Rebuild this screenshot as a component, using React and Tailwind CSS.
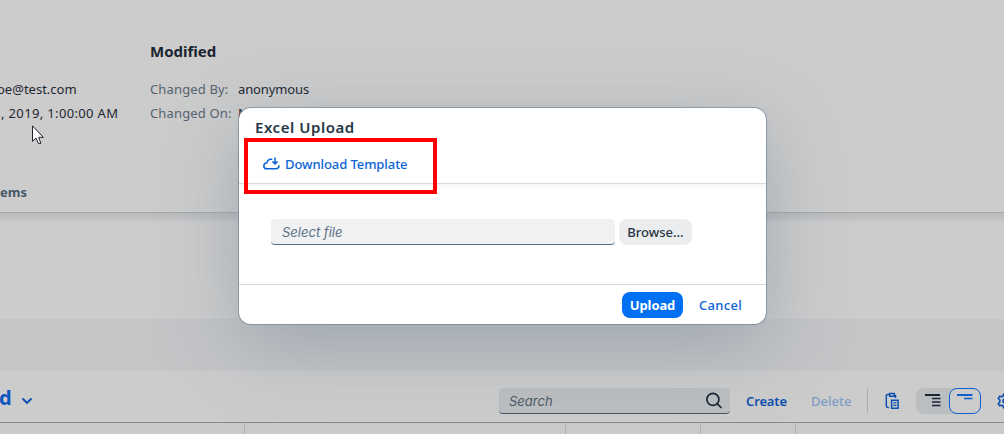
import React from "react";

function Field({ label, value }) {
  return (
    <div className="flex h-6 gap-2 text-[13px] leading-6 whitespace-nowrap">
      <span className="w-[80px] tracking-[0.15px] text-[#556370]">{label}</span>
      <span className="tracking-[-0.12px] text-[#1d2733]">{value}</span>
    </div>
  );
}

function Details() {
  return (
    <section className="flex h-[213px] shrink-0 flex-col border-b border-[#a6a8aa] bg-[#cccccc] pt-[39px]">
      <div className="flex h-[143px]">
        <div className="flex w-[150px] shrink-0 flex-col pt-[38px] text-[13px] leading-6 whitespace-nowrap text-[#1d2733]">
          <span className="-ml-[3px]">oe@test.com</span>
          <span className="ml-px tracking-[0.35px]">, 2019, 1:00:00 AM</span>
        </div>
        <div className="flex flex-col">
          <h2 className="h-[38px] text-[15px] leading-[25px] font-bold text-[#1a2430]">Modified</h2>
          <Field label="Changed By:" value="anonymous" />
          <Field label="Changed On:" value="Nov" />
        </div>
      </div>
      <div className="text-[13px] leading-5 font-bold text-[#475768]">ems</div>
    </section>
  );
}

function PasteIcon() {
  return (
    <svg width="15" height="18" viewBox="0 0 15 18" fill="none" stroke="#0c4fae" strokeWidth="1.5">
      <path d="M4 2.5H2.5Q1.3 2.5 1.3 3.7V14Q1.3 15.4 2.7 15.4H4" />
      <path d="M4.7 1.4H9.3V4.2H4.7Z" />
      <path d="M10.5 2.8V6" />
      <path d="M6.6 8.2H13.1V16.2H6.6Z" />
      <path d="M8.3 10.9H11.4M8.3 13.4H11.4" strokeWidth="1.2" />
    </svg>
  );
}

function Toolbar() {
  return (
    <div className="flex h-[51px] shrink-0 items-start pt-[17px] text-[13px] leading-[26px]">
      <div className="flex w-[499px] shrink-0 items-center">
        <span className="-ml-[1px] text-[20px] leading-[20px] font-bold text-[#0c56bd]">d</span>
        <svg className="mt-[6px] ml-[9px]" width="12" height="8" viewBox="0 0 12 8" fill="none" stroke="#0c4fae" strokeWidth="1.9" strokeLinecap="round">
          <path d="M2 2L6 6L10 2" />
        </svg>
      </div>
      <div className="flex h-[26px] w-[231px] shrink-0 items-center justify-between rounded-[4px] border-b border-[#45566a] bg-[#bcbfc1] pr-2 pl-[10px]">
        <span className="font-['Inter',sans-serif] text-[13px] text-[#4c5965] italic">Search</span>
        <svg width="17" height="17" viewBox="0 0 17 17" fill="none" stroke="#1a2736" strokeWidth="1.7" strokeLinecap="round">
          <circle cx="7.9" cy="7.4" r="6" />
          <path d="M12.3 11.8L16 15.5" />
        </svg>
      </div>
      <span className="ml-4 w-[65px] shrink-0 font-semibold tracking-[-0.15px] text-[#0c4fae]">Create</span>
      <span className="w-[56px] shrink-0 font-medium text-[#7f9cc5]">Delete</span>
      <div className="mt-[1px] h-6 w-px shrink-0 bg-[#a9adb1]" />
      <div className="mt-[4px] ml-[17px] w-[15px] shrink-0">
        <PasteIcon />
      </div>
      <div className="ml-4 flex h-[26px] w-[65px] shrink-0 justify-between rounded-lg bg-[#bbbec0]">
        <svg className="mt-[6px] ml-[9px]" width="16" height="13" viewBox="0 0 16 13" fill="none" stroke="#1a2736">
          <path d="M0 1H15" strokeWidth="2" />
          <path d="M7 4.5H15.5M7 8H15.5M7 11.5H15.5" strokeWidth="1.5" />
        </svg>
        <div className="flex h-[26px] w-8 rounded-lg border border-[#0c5fce] bg-[#cccccc]">
          <svg className="mt-[5px] ml-[7px]" width="16" height="6" viewBox="0 0 16 6" fill="none" stroke="#0c5fce">
            <path d="M0 1H15.5" strokeWidth="2" />
            <path d="M7 4.5H15.5" strokeWidth="1.5" />
          </svg>
        </div>
      </div>
      <svg className="mt-[5px] ml-4 shrink-0" width="16" height="16" viewBox="0 0 16 16" fill="none" stroke="#0c4fae" strokeWidth="1.6" strokeLinejoin="round">
        <path d="M6.7 1H9.3L9.8 3L11.3 3.8L13.3 3.2L14.7 5.5L13.2 7V9L14.7 10.5L13.3 12.8L11.3 12.2L9.8 13L9.3 15H6.7L6.2 13L4.7 12.2L2.7 12.8L1.3 10.5L2.8 9V7L1.3 5.5L2.7 3.2L4.7 3.8L6.2 3Z" />
        <circle cx="8" cy="8" r="2" />
      </svg>
    </div>
  );
}

function Dialog() {
  return (
    <div className="absolute top-[108px] left-[239px] flex h-[216px] w-[527px] flex-col rounded-xl bg-white shadow-[0_0_0_1px_rgba(85,107,130,0.45),0_20px_80px_rgba(85,107,130,0.36)]">
      <header className="flex h-[76px] shrink-0 flex-col border-b border-[#d9d9d9] shadow-[0_2px_4px_rgba(85,107,130,0.08)]">
        <h1 className="mt-[7px] ml-4 h-6 text-[15px] leading-6 font-semibold tracking-[0.55px] text-[#263645]">Excel Upload</h1>
        <div className="mt-[12px] ml-6 flex h-[26px] items-center text-[13px] font-medium text-[#0a64d6]">
          <svg className="-mt-px" width="17" height="14" viewBox="0 0 17 14" fill="none" stroke="#0a64d6" strokeWidth="1.5" strokeLinecap="round" strokeLinejoin="round">
            <path d="M8.7 2.3C6.4 1.7 4.4 3.2 3.9 5.7C1.9 6 .8 7.2 .8 8.9C.8 10.9 2.2 11.8 4 11.8H12.7C14.7 11.8 16 10.6 16 8.8" />
            <path d="M12 .9V6.8M9.8 4.7L12 6.9L14.2 4.7" />
          </svg>
          <span className="mt-px ml-[5px] tracking-[-0.08px] whitespace-nowrap">Download Template</span>
        </div>
      </header>
      <div className="flex h-[100px] shrink-0 gap-1 pt-[35px] pl-8">
        <div className="flex h-[26px] w-[344px] items-center rounded-[4px] border-b border-[#556b82] bg-[#eff1f2] pt-[2px] pl-[11px] font-['Inter',sans-serif] text-[13px] text-[#5d7085] italic">
          Select file
        </div>
        <button className="h-[26px] w-[73px] rounded-lg bg-[#ebecee] text-[13px] leading-[26px] font-medium text-[#263645]">Browse...</button>
      </div>
      <footer className="flex h-[40px] shrink-0 items-center justify-end gap-2 border-t border-[#d9d9d9] pr-4 text-[13px]">
        <button className="h-[26px] w-[61px] rounded-lg bg-[#0070f2] leading-[26px] font-bold tracking-[-0.1px] text-white">Upload</button>
        <button className="h-[26px] w-[59px] leading-[26px] font-medium tracking-[0.3px] text-[#0a64d6]">Cancel</button>
      </footer>
    </div>
  );
}

export default function App() {
  return (
    <main className="relative flex h-[434px] w-[1004px] flex-col overflow-hidden bg-[#cccccc] font-['Noto_Sans',sans-serif]">
      <Details />
      <div className="h-2 shrink-0 bg-linear-to-b from-[#b9bbbe] to-[#c4c5c7]" />
      <div className="h-[98px] shrink-0 bg-[#cccccc]" />
      <div className="h-[52px] shrink-0 bg-[#c4c5c7]" />
      <Toolbar />
      <div className="flex h-3 shrink-0 border-t border-[#838c95] bg-[#cacaca]">
        <div className="w-[245px] border-r border-[#b0b1b3]" />
        <div className="w-[321px] border-r border-[#b0b1b3]" />
        <div className="w-[135px] border-r border-[#b0b1b3]" />
        <div className="w-[95px] border-r border-[#b0b1b3]" />
      </div>
      <Dialog />
      <div className="absolute top-[138px] left-[244px] h-14 w-[193px] border-4 border-[#ff0000]" />
      <svg className="absolute top-[125px] left-[32px]" width="13" height="20" viewBox="0 0 13 20" fill="white" stroke="#20202c" strokeWidth="1">
        <path d="M.5 .8V16.3L4 13L6.4 18.4H8.9L6.7 12.3H11.3Z" />
      </svg>
    </main>
  );
}
